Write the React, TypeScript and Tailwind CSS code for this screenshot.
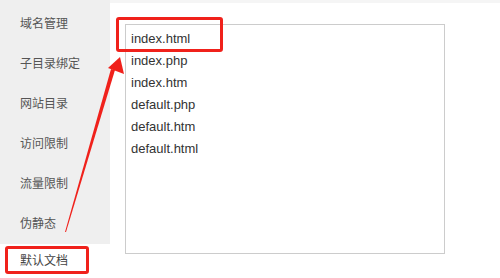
const menu = ["域名管理", "子目录绑定", "网站目录", "访问限制", "流量限制", "伪静态"];
const files = ["index.html", "index.php", "index.htm", "default.php", "default.htm", "default.html"];

export default function App() {
  return (
    <div
      className="relative w-[500px] h-[278px] overflow-hidden bg-white"
      style={{ fontFamily: '"Liberation Sans", "Noto Sans CJK SC", sans-serif' }}
    >
      <div className="flex h-full">
        {/* 左侧菜单 */}
        <div className="w-[110px] flex flex-col">
          <div className="bg-[#efefef] pt-[4px]">
            {menu.map((m) => (
              <div key={m} className="h-[40px] flex items-center pl-[20px] text-[12px] text-[#555]">
                {m}
              </div>
            ))}
          </div>
          <div className="h-[40px] flex items-center pl-[20px] text-[12px] text-[#444] bg-white">
            默认文档
          </div>
        </div>

        {/* 右侧内容 */}
        <div className="flex-1 flex flex-col">
          <div className="h-[3px] bg-[#f5f5f5]" />
          <div className="pl-[15px] pt-[21px]">
            <div className="w-[320px] h-[230px] border border-[#cccccc] pt-[3px] pl-[5px]">
              {files.map((f) => (
                <div key={f} className="h-[22px] leading-[22px] text-[13px] text-[#333]">
                  {f}
                </div>
              ))}
            </div>
          </div>
        </div>
      </div>

      {/* 标注框 */}
      <div className="absolute left-[116px] top-[17px] w-[107px] h-[35px] border-[3px] border-[#f0211b] rounded-[3px]" />
      <div className="absolute left-[5px] top-[246px] w-[84px] h-[28px] border-[3px] border-[#f0211b] rounded-[3px]" />

      {/* 箭头 */}
      <svg className="absolute left-0 top-0" width="500" height="278">
        <polygon points="65,232 66,232 115,70 111,69" fill="#f0211b" />
        <polygon points="120,57 124,74 108,68" fill="#f0211b" />
      </svg>
    </div>
  );
}
